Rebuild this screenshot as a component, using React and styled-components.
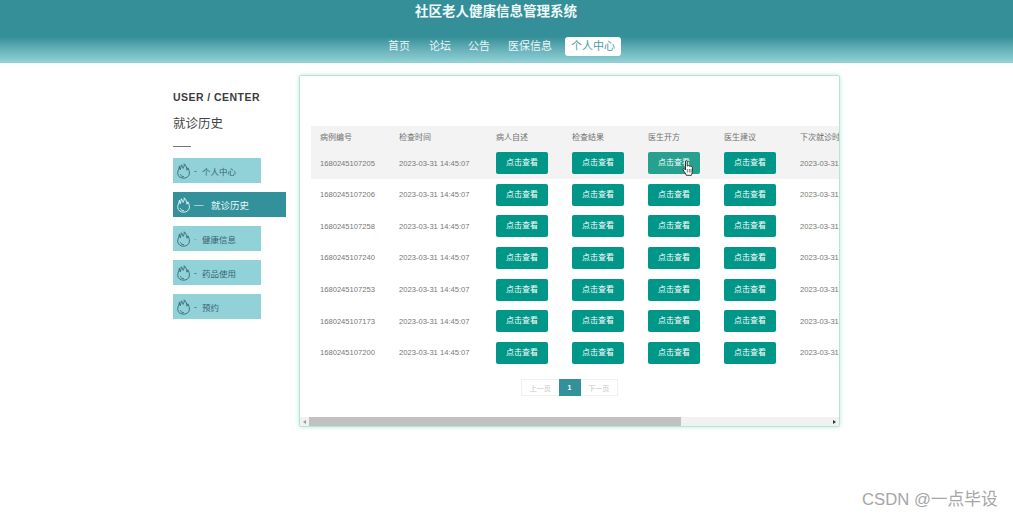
import React from "react";
import styled, { createGlobalStyle } from "styled-components";

const Global = createGlobalStyle`
  html, body { margin: 0; padding: 0; background: #fff; }
  body { font-family: "Liberation Sans", "Noto Sans CJK SC", sans-serif; width: 1013px; height: 519px; overflow: hidden; }
`;

const Page = styled.div`
  position: relative;
  width: 1013px;
  height: 519px;
`;
const Header = styled.header`
  height: 63px;
  box-sizing: border-box;
  padding-top: 4px;
  background: linear-gradient(180deg, #348f98 0%, #348f98 58%, #66b0b8 78%, #93d3d8 100%);
  display: flex;
  flex-direction: column;
  align-items: center;
`;
const Title = styled.h1`
  margin: 0 0 0 -21px;
  font-size: 13.5px;
  line-height: 16px;
  font-weight: 700;
  color: #eef8f8;
`;
const Nav = styled.nav`
  display: flex;
  margin-top: 17px;
  margin-left: -10px;
  height: 19px;
  align-items: center;
`;
const NavItem = styled.a`
  font-size: 11px;
  line-height: 19px;
  color: ${p => (p.$active ? "#4e9aa2" : "#eaf6f6")};
  background: ${p => (p.$active ? "#fff" : "transparent")};
  border-radius: 3px;
  padding: 0 6px;
  margin-left: ${p => p.$gap}px;
`;
const Main = styled.main`
  display: flex;
  padding: 12px 0 0 173px;
`;
const Side = styled.aside`
  width: 126px;
  padding-top: 15px;
`;
const SideEn = styled.div`
  font-size: 10.5px;
  line-height: 14px;
  font-weight: 700;
  color: #3c3c3c;
  letter-spacing: 0.45px;
`;
const SideTitle = styled.div`
  font-size: 12.5px;
  line-height: 16px;
  margin-top: 12px;
  color: #444;
`;
const SideRule = styled.div`
  width: 18px;
  height: 1px;
  background: #777;
  margin: 14px 0 11px;
`;
const SideList = styled.div`
  display: flex;
  flex-direction: column;
  align-items: flex-start;
  gap: 9px;
`;
const SideItem = styled.a`
  display: flex;
  align-items: center;
  box-sizing: border-box;
  height: 25px;
  width: ${p => (p.$active ? 113 : 88)}px;
  padding-left: 4px;
  background: ${p => (p.$active ? "#33919b" : "#90d2d8")};
  color: ${p => (p.$active ? "#eef8f8" : "#3b6470")};
  font-size: ${p => (p.$active ? 9.5 : 8.5)}px;
`;
const Flame = styled.svg`
  width: 13px;
  height: 16px;
  flex: none;
  margin-right: 1px;
  fill: none;
  stroke: currentColor;
  stroke-width: 0.9;
  stroke-linejoin: round;
  stroke-linecap: round;
`;
const Dash = styled.span`
  margin-left: 3px;
  width: ${p => (p.$active ? 17 : 8)}px;
  flex: none;
  opacity: ${p => (p.$faint ? 0.35 : 1)};
`;
const Panel = styled.section`
  box-sizing: border-box;
  width: 541px;
  height: 352px;
  border: 1px solid #b4e6d6;
  background: #fff;
  box-shadow: 0 0 4px rgba(110, 200, 170, 0.45);
  display: flex;
  flex-direction: column;
  border-radius: 2px;
`;
const Viewport = styled.div`
  flex: 1;
  overflow: hidden;
  padding: 50px 0 0 11px;
`;
const Table = styled.div`
  width: 640px;
`;
const Row = styled.div`
  display: grid;
  grid-template-columns: 79px 97px 76px 76px 76px 76px 140px;
  padding-left: 9px;
  align-items: center;
  height: ${p => (p.$head ? "21.2px" : "31.67px")};
  background: ${p => (p.$shade ? "#f3f3f3" : "transparent")};
  font-size: ${p => (p.$head ? 8 : 7.6)}px;
  color: ${p => (p.$head ? "#707070" : "#777")};
  white-space: nowrap;
`;
const ViewButton = styled.span`
  position: relative;
  display: block;
  width: 52px;
  height: 22px;
  line-height: 22px;
  text-align: center;
  font-size: 8px;
  color: #fff;
  border-radius: 2px;
  background: ${p => (p.$hover ? "#26a08f" : "#009688")};
`;
const Cursor = styled.svg`
  position: absolute;
  left: 34px;
  top: 8px;
  width: 11px;
  height: 16px;
`;
const Pager = styled.div`
  display: flex;
  width: 97px;
  height: 17px;
  margin: 10px 0 0 210px;
  font-size: 7px;
  line-height: 17px;
  text-align: center;
  color: #c6c6c6;
`;
const PageLink = styled.span`
  box-sizing: border-box;
  flex: 1;
  border: 1px solid #f0f0f0;
  border-width: 1px ${p => (p.$side === "l" ? 0 : 1)}px 1px ${p => (p.$side === "l" ? 1 : 0)}px;
`;
const PageNow = styled.span`
  width: 22px;
  flex: none;
  background: #33919b;
  color: #fff;
  font-weight: 700;
`;
const Scrollbar = styled.div`
  height: 9px;
  flex: none;
  display: flex;
  background: #f1f1f1;
`;
const ScrollArrow = styled.div`
  width: 9px;
  flex: none;
  display: flex;
  align-items: center;
  justify-content: center;
  &::before {
    content: "";
    border: 2px solid transparent;
    border-width: 2px 3px;
    ${p => (p.$dir === "l" ? "border-right-color: #9a9a9a; margin-right: 3px;" : "border-left-color: #333; margin-left: 3px;")}
  }
`;
const ScrollThumb = styled.div`
  width: 372px;
  background: #c1c1c1;
`;
const ScrollGap = styled.div`
  flex: 1;
`;
const Watermark = styled.div`
  position: absolute;
  left: 862px;
  top: 490px;
  font-size: 16.7px;
  line-height: 20px;
  color: #a6a6a6;
  font-family: "Liberation Sans", "Noto Sans CJK SC", sans-serif;
  white-space: nowrap;
`;

const FlameIcon = () => (
  <Flame viewBox="0 0 13 16">
    <path d="M2.4 3.6 C2.6 5 2.8 6 3.2 6.8 C3.8 5 4.3 3.2 4.3 1.8 C5.4 3 5.9 4.2 6.1 5.4 C6.9 4 7.4 2.4 7.2 .8 C9 2.4 9.8 4.8 9.9 7.2 C10.4 6.6 10.7 5.8 10.8 4.8 C11.8 6.4 12.4 8 12.4 10.2 C12.4 13.2 9.8 15.2 6.6 15.2 C3.4 15.2 .7 13.3 .7 10.2 C.7 7.8 2 6 2.4 3.6 Z" />
    <path d="M3.4 11.6 C4 13 5.2 13.7 6.6 13.7" />
  </Flame>
);

const ids = ["1680245107205", "1680245107206", "1680245107258", "1680245107240", "1680245107253", "1680245107173", "1680245107200"];
const time = "2023-03-31 14:45:07";
const heads = ["病例编号", "检查时间", "病人自述", "检查结果", "医生开方", "医生建议", "下次就诊时间"];
const menu = [
  { label: "个人中心" },
  { label: "就诊历史", active: true },
  { label: "健康信息", faint: true },
  { label: "药品使用" },
  { label: "预约" },
];
const nav = [["首页", 0], ["论坛", 7], ["公告", 5], ["医保信息", 6], ["个人中心", 7]];

export default function App() {
  return (
    <Page>
      <Global />
      <Header>
        <Title>社区老人健康信息管理系统</Title>
        <Nav>
          {nav.map(([t, gap], i) => (
            <NavItem key={t} $gap={gap} $active={i === 4}>{t}</NavItem>
          ))}
        </Nav>
      </Header>
      <Main>
        <Side>
          <SideEn>USER / CENTER</SideEn>
          <SideTitle>就诊历史</SideTitle>
          <SideRule />
          <SideList>
            {menu.map(m => (
              <SideItem key={m.label} $active={m.active}>
                <FlameIcon />
                <Dash $active={m.active} $faint={m.faint}>{m.active ? "—" : "-"}</Dash>
                {m.label}
              </SideItem>
            ))}
          </SideList>
        </Side>
        <Panel>
          <Viewport>
            <Table>
              <Row $head $shade>
                {heads.map(h => <span key={h}>{h}</span>)}
              </Row>
              {ids.map((id, r) => (
                <Row key={id} $shade={r === 0}>
                  <span>{id}</span>
                  <span>{time}</span>
                  {[0, 1, 2, 3].map(c => {
                    const hover = r === 0 && c === 2;
                    return (
                      <ViewButton key={c} $hover={hover}>
                        点击查看
                        {hover && (
                          <Cursor viewBox="0 0 11 16">
                            <path d="M3.5 1.3 C3.5 .4 5.2 .4 5.2 1.3 V6 H5.8 C6.3 5.3 7.2 5.5 7.4 6.3 C7.9 5.7 8.8 5.9 9 6.7 C9.5 6.3 10.4 6.6 10.4 7.5 V11 C10.4 13 9.6 13.8 9.4 15.3 H4.2 C3.8 13.6 2.6 12.4 1.2 10 C.5 8.8 1.8 8 2.6 8.9 L3.5 10 Z" fill="#fff" stroke="#222" strokeWidth="0.9" strokeLinejoin="round" />
                            <path d="M5.3 9 V12.5 M7.3 9 V12.5 M9 9 V12.5" stroke="#222" strokeWidth="0.6" fill="none" />
                          </Cursor>
                        )}
                      </ViewButton>
                    );
                  })}
                  <span>{time}</span>
                </Row>
              ))}
            </Table>
            <Pager>
              <PageLink $side="l">上一页</PageLink>
              <PageNow>1</PageNow>
              <PageLink $side="r">下一页</PageLink>
            </Pager>
          </Viewport>
          <Scrollbar>
            <ScrollArrow $dir="l" />
            <ScrollThumb />
            <ScrollGap />
            <ScrollArrow $dir="r" />
          </Scrollbar>
        </Panel>
      </Main>
      <Watermark>CSDN @一点毕设</Watermark>
    </Page>
  );
}
